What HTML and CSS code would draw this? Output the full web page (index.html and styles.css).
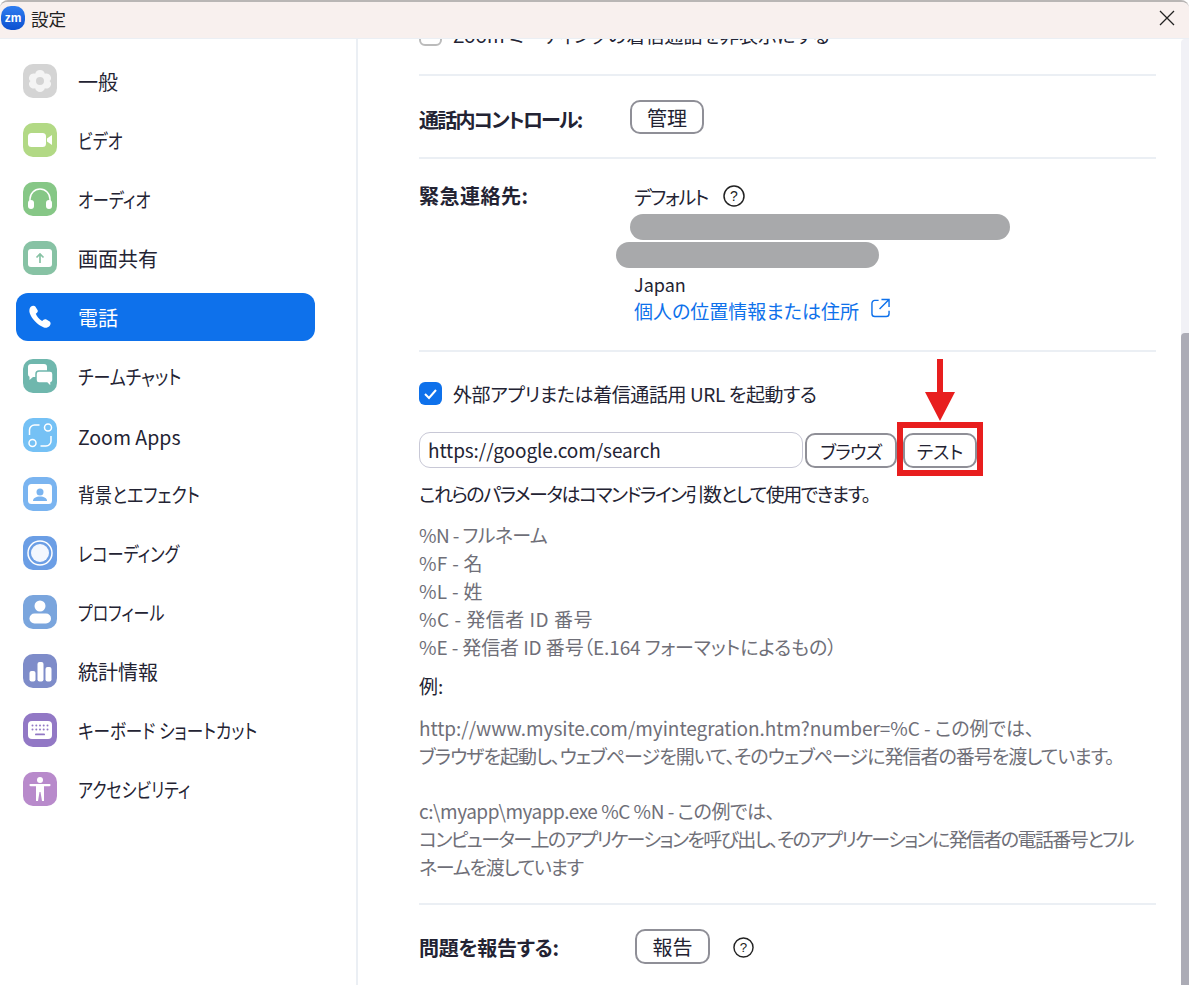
FILE: index.html
```html
<!DOCTYPE html>
<html lang="ja">
<head>
<meta charset="utf-8">
<title>設定</title>
<link rel="stylesheet" href="styles.css">
</head>
<body>
<div class="window">
  <header class="titlebar">
    <div class="logo">zm</div>
    <span class="title">設定</span>
    <svg class="close" viewBox="0 0 16 16" width="16" height="16"><path d="M1 1l14 14M15 1L1 15" stroke="#222" stroke-width="1.300" fill="none"/></svg>
  </header>
  <div class="body">
    <nav class="sidebar">
      <a class="item"><span class="ico c-gen"><svg viewBox="0 0 34 34"><path fill="#f4f4f4" fill-rule="evenodd" d="M17 6c2.600 0 4.400 1.700 4.800 3.700 1.900-.7 4.300-.1 5.600 2.100 1.300 2.200.6 4.600-.9 5.200 1.500 1.300 2.200 3 .9 5.200-1.300 2.200-3.700 2.800-5.600 2.100-.4 2-2.200 3.700-4.800 3.700s-4.400-1.700-4.800-3.700c-1.900.7-4.300.1-5.600-2.100-1.300-2.200-.6-3.900.9-5.200-1.500-.6-2.200-3-.9-5.200 1.300-2.200 3.700-2.800 5.600-2.100C12.600 7.700 14.400 6 17 6zm0 7a4 4 0 100 8 4 4 0 000-8z"/></svg></span><span class="label">一般</span></a>
      <a class="item"><span class="ico c-vid"><svg viewBox="0 0 34 34"><rect x="5" y="10" width="18" height="14" rx="3.500" fill="#fff"/><path fill="#fff" d="M24 15.500l5-3.500v10l-5-3.500z"/></svg></span><span class="label sx-80">ビデオ</span></a>
      <a class="item"><span class="ico c-aud"><svg viewBox="0 0 34 34"><path d="M7 21v-4a10 10 0 0120 0v4" fill="none" stroke="#fff" stroke-width="1.500"/><rect x="5" y="18" width="6" height="9" rx="3" fill="#fff"/><rect x="23" y="18" width="6" height="9" rx="3" fill="#fff"/></svg></span><span class="label sx-81">オーディオ</span></a>
      <a class="item"><span class="ico c-sha"><svg viewBox="0 0 34 34"><rect x="5" y="8" width="24" height="18" rx="3" fill="#fff"/><path d="M17 22v-9M13.500 16.500L17 13l3.500 3.500" fill="none" stroke="#87c2a4" stroke-width="1.700"/></svg></span><span class="label">画面共有</span></a>
      <a class="item active"><span class="ico"><svg viewBox="0 0 34 34"><path fill="#fff" d="M7.500 7c1.500-1.500 3.800-1.700 4.800-.5l2.200 3.500c.6 1 .3 2-.5 2.700l-1.200 1c1 2.700 3.300 5.700 6.300 7.300l1.500-1.200c.9-.7 1.900-.7 2.800-.2l3.300 2c1.300 1 1.200 3-.1 4.300-1.500 1.500-3.700 2.200-5.700 1.500C14.500 25 8.300 18.500 6.700 13c-.6-2-.4-4.500.8-6z"/></svg></span><span class="label">電話</span></a>
      <a class="item"><span class="ico c-cha"><svg viewBox="0 0 34 34"><path fill="#fff" d="M8 5h13a3 3 0 013 3v7a3 3 0 01-3 3H10l-3.500 3v-3.200A3 3 0 015 15V8a3 3 0 013-3z"/><path fill="#fff" stroke="#6fb7ad" stroke-width="1.500" d="M16 12h11a3 3 0 013 3v6a3 3 0 01-2 2.800V28l-4-4h-8a3 3 0 01-3-3v-6a3 3 0 013-3z"/></svg></span><span class="label sx-85">チームチャット</span></a>
      <a class="item"><span class="ico c-app"><svg viewBox="0 0 34 34" fill="none" stroke="#fff" stroke-width="1.500"><circle cx="25" cy="9.500" r="3.500"/><circle cx="9.500" cy="25" r="3.500"/><path d="M6.500 17v-5a5 5 0 015-5h5M28 18v5a5 5 0 01-5 5h-5.500"/></svg></span><span class="label label-latin">Zoom Apps</span></a>
      <a class="item"><span class="ico c-bg"><svg viewBox="0 0 34 34"><rect x="5" y="7" width="24" height="20" rx="3.500" fill="#fff"/><circle cx="17" cy="15" r="3.500" fill="#7ab4f0"/><path fill="#7ab4f0" d="M10 24c0-3 3-4.500 7-4.500s7 1.500 7 4.500z"/></svg></span><span class="label sx-85">背景とエフェクト</span></a>
      <a class="item"><span class="ico c-rec"><svg viewBox="0 0 34 34"><circle cx="17" cy="17" r="12" fill="none" stroke="#fff" stroke-width="1.500"/><circle cx="17" cy="17" r="9" fill="#f3f7fe"/></svg></span><span class="label sx-81">レコーディング</span></a>
      <a class="item"><span class="ico c-pro"><svg viewBox="0 0 34 34"><circle cx="17" cy="11" r="5.500" fill="#fff"/><rect x="6.500" y="18.500" width="21.500" height="10" rx="5" fill="#fff"/></svg></span><span class="label sx-80">プロフィール</span></a>
      <a class="item"><span class="ico c-sta"><svg viewBox="0 0 34 34"><rect x="6.500" y="17" width="6" height="10.500" rx="2" fill="#fff"/><rect x="14.500" y="8" width="6" height="19.500" rx="2" fill="#fff"/><rect x="22.500" y="13" width="6" height="14.500" rx="2" fill="#fff"/></svg></span><span class="label">統計情報</span></a>
      <a class="item"><span class="ico c-key"><svg viewBox="0 0 34 34"><rect x="5" y="8" width="24" height="18" rx="4" fill="#fff"/><g fill="#9278c5"><circle cx="9.500" cy="12.500" r="1"/><circle cx="13.300" cy="12.500" r="1"/><circle cx="17" cy="12.500" r="1"/><circle cx="20.700" cy="12.500" r="1"/><circle cx="24.500" cy="12.500" r="1"/><circle cx="9.500" cy="16.500" r="1"/><circle cx="13.300" cy="16.500" r="1"/><circle cx="17" cy="16.500" r="1"/><circle cx="20.700" cy="16.500" r="1"/><circle cx="24.500" cy="16.500" r="1"/><rect x="12" y="20.500" width="10" height="1.800" rx=".9"/></g></svg></span><span class="label sx-83">キーボード ショートカット</span></a>
      <a class="item"><span class="ico c-acc"><svg viewBox="0 0 34 34"><circle cx="17" cy="8" r="3" fill="#fff"/><path fill="#fff" d="M7.500 12h19a1 1 0 010 2.200H21V29h-2l-1.500-9h-1L15 29h-2V14.200H7.500a1 1 0 010-2.200z"/></svg></span><span class="label sx-80">アクセシビリティ</span></a>
    </nav>
    <main class="content">
      <section class="sec sec-clip">
        <label class="check"><span class="box"></span><span>Zoom ミーティングの着信通話を非表示にする</span></label>
      </section>
      <section class="sec sec-ctrl">
        <strong class="head head-ctrl">通話内コントロール:</strong>
        <button class="btn btn-manage">管理</button>
      </section>
      <section class="sec sec-emg">
        <strong class="head head-emg">緊急連絡先:</strong>
        <div class="emg">
          <div class="default"><span class="default-text">デフォルト</span><svg class="help" viewBox="0 0 22 22"><circle cx="11" cy="11" r="10" fill="none" stroke="#222" stroke-width="1.500"/><text x="11" y="16" text-anchor="middle" class="qm">?</text></svg></div>
          <div class="redact r1"></div>
          <div class="redact r2"></div>
          <div class="japan">Japan</div>
          <a class="link">個人の位置情報または住所<svg class="ext" viewBox="0 0 20 20" fill="none" stroke="#0e71eb" stroke-width="1.500"><path d="M8 2H4a3 3 0 00-3 3v11a3 3 0 003 3h12a3 3 0 003-3v-3M11 1h8v8M19 1L9 11"/></svg></a>
        </div>
      </section>
      <section class="sec sec-ext">
        <label class="check check-ext on"><span class="box"><svg viewBox="0 0 23 23"><path d="M6 12l4 4 7-8" fill="none" stroke="#fff" stroke-width="2"/></svg></span><span>外部アプリまたは着信通話用 URL を起動する</span></label>
        <div class="urlrow">
          <div class="input">https://google.com/search</div>
          <button class="btn btn-browse">ブラウズ</button>
          <button class="btn btn-test">テスト</button>
        </div>
        <p class="dark p-params">これらのパラメータはコマンドライン引数として使用できます。</p>
        <div class="params list">
          <div class="ls-n">%N - フルネーム</div>
          <div class="ls-f">%F - 名</div>
          <div class="ls-f">%L - 姓</div>
          <div class="ls-c">%C - 発信者 ID 番号</div>
          <div class="ls-e">%E - 発信者 ID 番号（E.164 フォーマットによるもの）</div>
        </div>
        <p class="dark p-ex">例:</p>
        <div class="params ex1">
          <div class="ls-l1">http://www.mysite.com/myintegration.htm?number=%C - この例では、</div>
          <div class="ls-l2">ブラウザを起動し、ウェブページを開いて、そのウェブページに発信者の番号を渡しています。</div>
        </div>
        <div class="params ex2">
          <div class="ls-l3">c:\myapp\myapp.exe %C %N - この例では、</div>
          <div class="ls-l4">コンピューター上のアプリケーションを呼び出し、そのアプリケーションに発信者の電話番号とフル</div>
          <div class="ls-l5">ネームを渡しています</div>
        </div>
      </section>
      <section class="sec sec-rep">
        <strong class="head head-rep">問題を報告する:</strong>
        <button class="btn btn-report">報告</button>
        <svg class="help help-rep" viewBox="0 0 22 22"><circle cx="11" cy="11" r="10" fill="none" stroke="#222" stroke-width="1.500"/><text x="11" y="16" text-anchor="middle" class="qm">?</text></svg>
      </section>
      <div class="track"></div>
      <div class="thumb"></div>
      <div class="redbox"></div>
      <svg class="arrow" viewBox="0 0 30 62"><path fill="#e81e1e" d="M12 0h6v33h12L15 62 0 33h12z"/></svg>
    </main>
  </div>
</div>
</body>
</html>
```

FILE: styles.css
```css
* { box-sizing: border-box; }
html, body { margin: 0; padding: 0; height: 100%; overflow: hidden; background: #fff; }
body { font-family: "Noto Sans CJK JP", "Noto Sans", sans-serif; color: #232333; font-size: 19px; }
.window { width: 1189px; height: 985px; display: flex; flex-direction: column; border-top: 2px solid #b9b6b5; border-radius: 8px 8px 0 0; overflow: hidden; }
.titlebar { position: relative; z-index: 2; height: 37px; flex: none; background: #f8f0ee; border-bottom: 1px solid #ebeff4; display: flex; align-items: center; padding: 0 0 4px 1px; }
.logo { width: 24px; height: 24px; border-radius: 10px; background: linear-gradient(#2f7df0, #0b50d0); color: #fff; font: 700 12px/24px "Liberation Sans", sans-serif; text-align: center; }
.title { margin-left: 6px; font-size: 17.500px; color: #222; }
.close { margin-left: auto; margin-right: 14px; }
.body { flex: 1; display: flex; min-height: 0; }
.sidebar { width: 358px; flex: none; border-right: 2px solid #ebeff4; padding: 18px 0 0 16px; display: flex; flex-direction: column; gap: 11px; }
.item { width: 299px; height: 48px; flex: none; display: flex; align-items: center; padding-left: 7px; border-radius: 12px; font-size: 20px; color: #232333; font-feature-settings: "palt"; }
.item.active { background: #0e71eb; color: #fff; }
.ico { width: 34px; height: 34px; border-radius: 10px; flex: none; display: block; }
.ico svg { display: block; width: 34px; height: 34px; }
.label { margin-left: 21px; white-space: nowrap; transform-origin: left center; }
.label-latin { font-size: 19.500px; position: relative; top: 1px; }
.sx-80 { transform: scaleX(.8); }
.sx-81 { transform: scaleX(.81); }
.sx-83 { transform: scaleX(.83); }
.sx-85 { transform: scaleX(.85); }
.c-gen { background: #d4d4d4; } .c-vid { background: #b2d985; } .c-aud { background: #86c786; }
.c-sha { background: #87c2a4; } .c-cha { background: #6fb7ad; } .c-app { background: #75c1f5; }
.c-bg { background: #7ab4f0; } .c-rec { background: #6b9ee5; } .c-pro { background: #7aa5dd; }
.c-sta { background: #7e8cc9; } .c-key { background: #9278c5; } .c-acc { background: #b88acb; }
.content { flex: 1; position: relative; padding: 0 33px 0 61px; min-width: 0; overflow: hidden; font-feature-settings: "palt"; }
.sec { border-bottom: 2px solid #ebeff4; }
.sec-clip { margin-top: -16px; height: 53px; }
.check { display: flex; align-items: center; height: 23px; gap: 11px; white-space: nowrap; }
.check-ext { letter-spacing: -.4px; }
.box { width: 23px; height: 23px; border-radius: 6px; border: 2px solid #bbb; flex: none; background: #fff; }
.box svg { display: block; }
.check.on .box { background: #0e71eb; border: 0; }
.sec-ctrl { height: 83px; display: flex; align-items: flex-start; padding-top: 24px; }
.head { font-weight: 700; font-size: 20px; color: #232333; white-space: nowrap; }
.btn { font-family: inherit; font-size: 20px; color: #232333; background: #fff; border: 2px solid #8f8f97; border-radius: 10px; padding: 0; display: flex; align-items: center; justify-content: center; font-feature-settings: "palt"; }
.head-ctrl { width: 211px; line-height: 40px; letter-spacing: -1.800px; }
.btn-manage { width: 74px; height: 34px; }
.sec-emg { height: 193px; display: flex; padding-top: 22px; }
.head-emg { width: 215px; line-height: 30px; letter-spacing: .5px; }
.emg { display: flex; flex-direction: column; align-items: flex-start; }
.default { display: flex; align-items: center; gap: 15px; height: 30px; }
.default-text { letter-spacing: -1.400px; }
.help { width: 22px; height: 22px; flex: none; }
.qm { font: 400 14px "Liberation Sans", sans-serif; fill: #222; }
.redact { background: #a8a9ab; height: 26px; border-radius: 13px; }
.r1 { width: 380px; margin: 3px 0 0 -4px; }
.r2 { width: 263px; margin: 2px 0 0 -18px; }
.japan { margin-top: 3px; line-height: 26px; font-size: 18px; }
.link { color: #0e71eb; line-height: 28px; display: flex; align-items: flex-start; gap: 12px; }
.ext { width: 19px; height: 20px; margin-top: 1px; }
.sec-ext { height: 553px; padding-top: 30px; }
.urlrow { display: flex; align-items: flex-end; margin-top: 27px; height: 36px; }
.input { width: 384px; height: 36px; border: 1px solid #c8c8d6; border-radius: 11px; padding: 0 8px; line-height: 34px; letter-spacing: -.1px; }
.btn-browse { width: 92px; height: 35px; margin-left: 2px; font-size: 18px; letter-spacing: -.7px; }
.btn-test { width: 74px; height: 35px; margin-left: 6px; font-size: 18px; }
p { margin: 0; }
.dark { line-height: 28px; }
.p-params { margin-top: 12px; white-space: nowrap; letter-spacing: -1.500px; }
.params { color: #6f6f78; line-height: 28px; white-space: nowrap; }
.list { margin-top: 13px; }
.ls-n { letter-spacing: -.6px; }
.ls-f { letter-spacing: .3px; }
.ls-c { letter-spacing: .5px; }
.ls-e { letter-spacing: -.1px; }
.ls-l1 { letter-spacing: -.05px; }
.ls-l2 { letter-spacing: -1px; }
.ls-l3 { letter-spacing: -.47px; }
.ls-l4 { letter-spacing: -1.600px; }
.ls-l5 { letter-spacing: -1.250px; }
.p-ex { margin-top: 11px; }
.ex1 { margin-top: 14px; }
.ex2 { margin-top: 27px; }
.sec-rep { border-bottom: 0; display: flex; align-items: flex-start; padding-top: 24px; }
.head-rep { width: 216px; line-height: 38px; letter-spacing: -.3px; }
.btn-report { width: 75px; height: 35px; }
.help-rep { width: 21px; height: 21px; margin: 8px 0 0 23px; }
.track { position: absolute; right: 0; top: 0; width: 8px; height: 300px; background: #f1f1f6; border-radius: 4px 0 0 0; }
.thumb { position: absolute; right: 0; top: 294px; width: 8px; height: 700px; background: #acacb6; border-radius: 4px 0 0 0; }
.redbox { position: absolute; left: 539px; top: 383px; width: 86px; height: 54px; border: 6px solid #e81e1e; }
.arrow { position: absolute; left: 567px; top: 320px; width: 30px; height: 62px; }
```
